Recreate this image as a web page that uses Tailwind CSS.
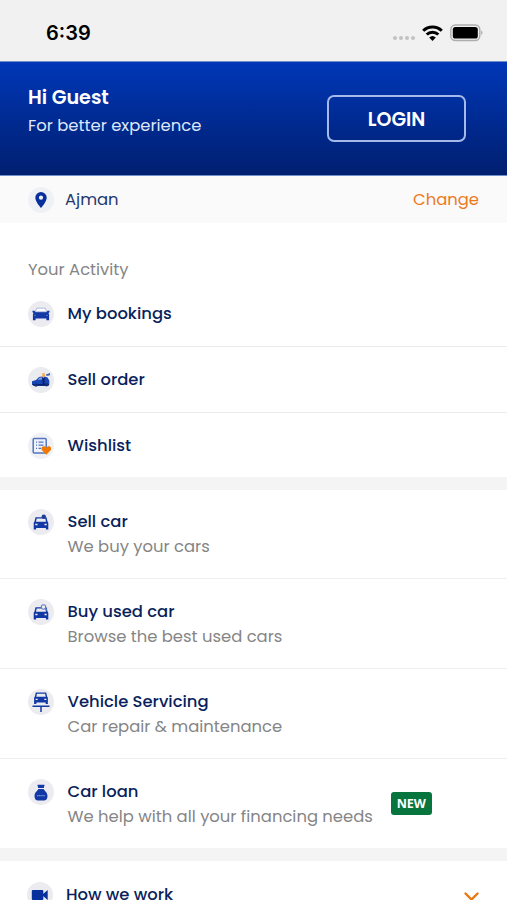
<!DOCTYPE html>
<html lang="en">
<head>
<meta charset="utf-8">
<meta name="viewport" content="width=device-width, initial-scale=1">
<title>Account menu</title>
<script src="https://cdn.jsdelivr.net/npm/@tailwindcss/browser@4"></script>
</head>
<body class="w-[507px] h-[900px] overflow-hidden bg-white font-['Poppins','Inter',sans-serif] text-[16.42px] leading-6 text-[#0a1f5c] whitespace-nowrap">
<svg class="hidden">
  <symbol id="front" viewBox="0 0 18 18">
    <path fill="#1238a5" fill-rule="evenodd" d="M3.5 4.3h11l1 4.2.8 1.2v6.8h-2.4v-1.6H4.1v1.6H1.7V9.7l.8-1.2zM4.7 5.6 4 8.7h10l-.7-3.1zM3.3 10.8v1.5h2.2v-1.5zm9.2 0v1.5h2.2v-1.5z"/>
  </symbol>
</svg>
<main class="flex flex-col h-full">
  <div class="h-[61px] shrink-0 bg-[#f1f1f1] flex items-center justify-between pl-[46px] pr-[24px] pt-[5px]">
    <span class="font-['Inter',sans-serif] text-[20px] font-semibold text-black">6:39</span>
    <div class="flex items-center gap-[7px]">
      <div class="flex gap-[2px] pt-[10px]"><i class="size-1 rounded-full bg-[#c2c2c2]"></i><i class="size-1 rounded-full bg-[#c2c2c2]"></i><i class="size-1 rounded-full bg-[#c2c2c2]"></i><i class="size-1 rounded-full bg-[#c2c2c2]"></i></div>
      <svg class="-mt-px" width="21" height="16" viewBox="0 0 21 16" fill="none" stroke="#000" stroke-width="3"><path d="M1.2 5.7a13.3 13.3 0 0 1 18.6 0M4.7 9.5a8.3 8.3 0 0 1 11.6 0"/><path fill="#000" stroke="none" d="M10.5 16 7.2 12.6a4.8 4.8 0 0 1 6.6 0z"/></svg>
      <svg width="33" height="18" viewBox="0 0 33 18"><rect x=".8" y="1" width="29" height="15.5" rx="4.5" fill="#f1f1f1" stroke="#adadad" stroke-width="1.4"/><rect x="2.8" y="3" width="25" height="11.5" rx="2.6"/><path d="M31.3 6.3q2.2 2.5 0 5z" fill="#999"/></svg>
    </div>
  </div>
  <header class="h-[115px] shrink-0 bg-linear-to-b from-[#0037b8] to-[#001f70] border-y border-[#6f8fc9] flex justify-between pl-7 pr-[41px] text-white">
    <div class="pt-[22px]">
      <div class="text-[19.2px] font-semibold leading-[27px]">Hi Guest</div>
      <div class="leading-7 pt-px text-[#dfe7fb]">For better experience</div>
    </div>
    <button class="mt-[33px] w-[139px] h-[47px] border-2 border-[#a5b9eb] rounded-[7px] text-[19px] leading-[43px] pt-px font-semibold">LOGIN</button>
  </header>
  <div class="h-[47px] shrink-0 bg-[#fafafa] flex items-center pl-7 pr-7">
    <span class="size-[26px] rounded-full bg-[#f0f1f4] flex items-center justify-center"><svg width="12" height="16" viewBox="0 0 12 16"><path fill="#08309c" fill-rule="evenodd" d="M6 0a5.7 5.7 0 0 1 5.7 5.7C11.7 9.8 6 16 6 16S.3 9.8.3 5.7A5.7 5.7 0 0 1 6 0m0 3.6a2.1 2.1 0 1 0 0 4.2 2.1 2.1 0 0 0 0-4.2"/></svg></span>
    <span class="ml-[11px] text-[#24386f]">Ajman</span>
    <a class="ml-auto text-[#ec7a1c]">Change</a>
  </div>
  <section class="shrink-0 pt-[35px] border-b-[13px] border-[#f4f4f5]">
    <h2 class="pl-7 leading-6 text-[#858585]">Your Activity</h2>
    <div class="h-[65px] flex items-center pl-7 gap-[13.5px] border-b border-[#eaebed]">
      <span class="size-[26px] rounded-full bg-[#ececf0] flex items-center justify-center"><svg width="18" height="14" viewBox="0 0 18 14"><path fill="#1238a5" d="M.5 3.8h2l1 1h11l1-1h2v1.4l-1 .7.6 1.5v5.8h-2.7v-1.6H3.6v1.6H.9V7.4l.6-1.5-1-.7z"/><path fill="#fff" stroke="#9cafd7" stroke-width=".8" d="M4.7 1.2h8.6l1.4 3.6H3.3z"/><path stroke="#7f9add" stroke-width=".6" d="M2 8.4h2m10 0h2"/></svg></span>
      <span class="font-medium">My bookings</span>
    </div>
    <div class="h-[66px] flex items-center pl-7 gap-[13.5px] border-b border-[#eaebed]">
      <span class="size-[26px] rounded-full bg-[#ebecef] flex items-center justify-center"><svg width="20" height="16" viewBox="0 0 20 16"><path fill="#1746b5" d="M1 9.3 5 8l3-3 5-.7 3.5 1.2 1.8 3v4.1L16 14H3L1 12.5z"/><path fill="#8fa9dc" d="m6.5 7.7 2.1-1.9 2.5-.2-.3 2z"/><path fill="#08236d" d="M11.4 5.5h2.2v8.3h-2zM1 12h17v1.4H2.5z"/><path fill="#f3ae5d" d="M11 1.2h3V4l-1.5 2-1.2-1z"/><path fill="#3d63bd" d="m15 2.4 4-1.3v2.1l-3.4.8z"/><circle cx="5" cy="13" r="1.7" fill="#143078"/><circle cx="15.5" cy="12.8" r="1.7" fill="#143078"/></svg></span>
      <span class="font-medium">Sell order</span>
    </div>
    <div class="h-[64px] flex items-center pl-7 pt-px gap-[13.5px]">
      <span class="size-[26px] rounded-full bg-[#f0f1f4] flex items-center justify-center"><svg width="19" height="18" viewBox="0 0 19 18"><rect x="1.2" y="1.6" width="13" height="14.5" rx="1" fill="#eef2fa" stroke="#5476bd" stroke-width="1.5"/><path stroke="#5476bd" stroke-width="1.2" d="M4 5.1h1m1.5 0h5M4 8.2h1m1.5 0h5M4 11.4h1m1.5 0H9"/><path fill="#f27800" d="m14.3 17.7-4.1-4.1c-1.7-1.8-.5-4.4 1.5-4.4 1.1 0 2.1.6 2.6 1.5.5-.9 1.5-1.5 2.6-1.5 2 0 3.2 2.6 1.5 4.4z"/></svg></span>
      <span class="font-medium">Wishlist</span>
    </div>
  </section>
  <section class="shrink-0 border-b-[13px] border-[#f4f4f5]">
    <div class="h-[89px] flex pl-7 pt-[19px] gap-[13.5px] border-b border-[#eeeff1]">
      <span class="size-[26px] rounded-full bg-[#ececf0] flex items-center justify-center"><svg width="18" height="18" viewBox="0 0 18 18"><use href="#front"/><circle cx="11.8" cy="3.7" r="2.2" fill="#1c3e99"/></svg></span>
      <div class="leading-[25px]"><div class="font-medium">Sell car</div><div class="text-[#858585]">We buy your cars</div></div>
    </div>
    <div class="h-[90px] flex pl-7 pt-[20px] gap-[13.5px] border-b border-[#eeeff1]">
      <span class="size-[26px] rounded-full bg-[#ececf0] flex items-center justify-center"><svg width="18" height="18" viewBox="0 0 18 18"><use href="#front"/><circle cx="11.5" cy="4" r="2.2" fill="#ececf0" stroke="#6781bd" stroke-width="1.1"/><path stroke="#6781bd" stroke-width="1.2" d="m13 5.7 2 2"/></svg></span>
      <div class="leading-[25px]"><div class="font-medium">Buy used car</div><div class="text-[#858585]">Browse the best used cars</div></div>
    </div>
    <div class="h-[90px] flex pl-7 pt-[20px] gap-[13.5px] border-b border-[#eeeff1]">
      <span class="size-[26px] rounded-full bg-[#ececf0] flex items-center justify-center"><svg width="18" height="20" viewBox="0 0 18 20"><svg x="0.5" y="-3.5" width="17" height="17" viewBox="0 0 18 18"><use href="#front"/></svg><path stroke="#1238a5" stroke-width="1.5" d="M.5 14.2h17M9 14.2V20"/></svg></span>
      <div class="leading-[25px]"><div class="font-medium">Vehicle Servicing</div><div class="text-[#858585]">Car repair &amp; maintenance</div></div>
    </div>
    <div class="h-[89px] flex pl-7 pt-[20px]">
      <span class="size-[26px] rounded-full bg-[#ececf0] flex items-center justify-center"><svg width="14" height="17" viewBox="0 0 14 17"><path fill="#1238a5" d="M3.4.8h7.2L9.8 4H4.2zM4.3 5h5.4c.5 1.8 3.8 3 3.8 7.2 0 2.8-1.5 4.2-3.6 4.2H4.1c-2.1 0-3.6-1.4-3.6-4.2C.5 8 3.8 6.8 4.3 5z"/><path stroke="#7894d8" stroke-width="1.3" stroke-dasharray="1.5 .6" d="M3 11.6h8"/></svg></span>
      <div class="ml-[13.5px] w-[323.5px] leading-[25px]"><div class="font-medium">Car loan</div><div class="text-[#858585]">We help with all your financing needs</div></div>
      <span class="mt-[13px] w-[40.5px] h-[23px] rounded-[3px] bg-[#08753f] text-white font-['Open_Sans',sans-serif] text-[12.5px] leading-[24px] font-bold text-center">NEW</span>
    </div>
  </section>
  <section class="shrink-0 flex items-center h-[67px] pl-[27px] pr-7 gap-[13px]">
    <span class="size-[26px] rounded-full bg-[#ececf0] flex items-center justify-center"><svg width="18" height="12" viewBox="0 0 18 12"><rect x=".8" y="1" width="11.5" height="10" rx="1" fill="#08309c"/><path fill="#08309c" d="M12 5.1 16.7 1v10L12 6.9z"/></svg></span>
    <span class="font-medium">How we work</span>
    <svg class="ml-auto mt-[4px]" width="15" height="10" viewBox="0 0 15 10" fill="none" stroke="#e87914" stroke-width="2.4" stroke-linecap="round" stroke-linejoin="round"><path d="m1.5 1.5 6 6 6-6"/></svg>
  </section>
</main>
</body>
</html>
